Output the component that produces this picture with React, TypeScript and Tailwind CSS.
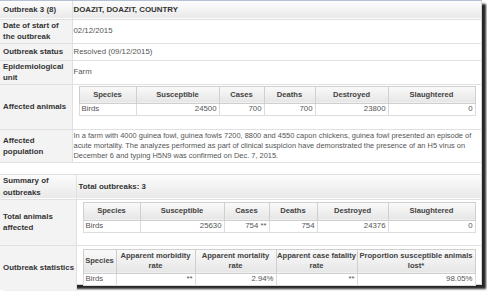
import type { ReactNode } from "react";

const labelCell =
  "bg-[#f3f3f3] border-r border-[#e0e0e0] px-[3px] align-middle text-left font-bold text-[7.9px] leading-[11px] text-[#333]";
const valueCell = "pl-[1px] pr-[2px] align-middle text-left text-[7.8px] leading-[10px] text-[#555]";
const rowLine = "border-b border-[#e0e0e0]";
const thCell =
  "border border-[#cfcfcf] bg-linear-to-b from-[#fafafa] to-[#e6e6e6] px-0 text-center align-middle font-bold text-[7.6px] leading-[10px] text-[#444]";
const tdBase = "border border-[#dcdcdc] bg-white px-[2px] text-[7.8px] leading-[10px] text-[#555]";

interface InnerTableProps {
  widths: number[];
  headers: ReactNode[];
  row: string[];
  headHeight: string;
  className: string;
}

function InnerTable({ widths, headers, row, headHeight, className }: InnerTableProps) {
  return (
    <table className={`table-fixed border-collapse ${className}`}>
      <colgroup>
        {widths.map((w, i) => (
          <col key={i} style={{ width: w }} />
        ))}
      </colgroup>
      <thead>
        <tr className={headHeight}>
          {headers.map((h, i) => (
            <th key={i} className={thCell}>
              {h}
            </th>
          ))}
        </tr>
      </thead>
      <tbody>
        <tr className="h-[12px]">
          {row.map((v, i) => (
            <td key={i} className={i === 0 ? `${tdBase} text-left` : `${tdBase} text-right`}>
              {v}
            </td>
          ))}
        </tr>
      </tbody>
    </table>
  );
}

const killedHeaders = ["Species", "Susceptible", "Cases", "Deaths", "Destroyed", "Slaughtered"];

export default function App() {
  return (
    <div className="h-[292px] w-[487px] overflow-hidden bg-white font-['Liberation_Sans',Arial,sans-serif]">
      <div className="h-[285px] w-[482px] border-t border-r border-b border-t-[#b5c2d6] border-r-[#d2d2d2] border-b-[#d2d2d2] bg-white shadow-[4px_4px_2px_rgba(0,0,0,0.85)]">
        <table className="w-[481px] table-fixed border-collapse">
          <colgroup>
            <col className="w-[72px]" />
            <col />
          </colgroup>
          <tbody>
            <tr className={`h-[18px] ${rowLine} bg-linear-to-b from-[#fdfdfd] to-[#e9e9e9]`}>
              <td className="border-r border-[#e0e0e0] px-[3px] align-middle font-bold text-[7.9px] text-[#333]">
                Outbreak 3 (8)
              </td>
              <td className="pl-[1px] align-middle font-bold text-[7.9px] text-[#333]">DOAZIT, DOAZIT, COUNTRY</td>
            </tr>
            <tr className={`h-[24px] ${rowLine}`}>
              <td className={labelCell}>Date of start of the outbreak</td>
              <td className={valueCell}>02/12/2015</td>
            </tr>
            <tr className={`h-[17px] ${rowLine}`}>
              <td className={labelCell}>Outbreak status</td>
              <td className={valueCell}>Resolved (09/12/2015)</td>
            </tr>
            <tr className={`h-[24px] ${rowLine}`}>
              <td className={labelCell}>Epidemiological unit</td>
              <td className={valueCell}>Farm</td>
            </tr>
            <tr className={`h-[44px] ${rowLine}`}>
              <td className={labelCell}>Affected animals</td>
              <td className="pt-[1px] pb-[13px] pl-[6px] align-top">
                <InnerTable
                  className="w-[396px]"
                  widths={[57, 83, 45, 51, 73, 87]}
                  headers={killedHeaders}
                  row={["Birds", "24500", "700", "700", "23800", "0"]}
                  headHeight="h-[17px]"
                />
              </td>
            </tr>
            <tr className={`h-[33px] ${rowLine}`}>
              <td className={labelCell}>Affected population</td>
              <td className={`${valueCell} whitespace-nowrap text-[7.45px] leading-[9.5px]`}>
                In a farm with 4000 guinea fowl, guinea fowls 7200, 8800 and 4550 capon chickens, guinea fowl presented
                an episode of
                <br />
                acute mortality. The analyzes performed as part of clinical suspicion have demonstrated the presence of
                an H5 virus on
                <br />
                December 6 and typing H5N9 was confirmed on Dec. 7, 2015.
              </td>
            </tr>
          </tbody>
        </table>

        <div className="h-[11px]" />

        <table className="w-[481px] table-fixed border-collapse border-t border-[#e0e0e0]">
          <colgroup>
            <col className="w-[76px]" />
            <col />
          </colgroup>
          <tbody>
            <tr className={`h-[23px] ${rowLine} bg-linear-to-b from-[#fdfdfd] to-[#e9e9e9]`}>
              <td className="border-r border-[#e0e0e0] px-[3px] align-middle font-bold text-[7.9px] leading-[12px] text-[#333]">
                Summary of outbreaks
              </td>
              <td className="pl-[2px] align-middle font-bold text-[7.9px] text-[#333]">Total outbreaks: 3</td>
            </tr>
            <tr className={`h-[43px] ${rowLine}`}>
              <td className={labelCell}>Total animals affected</td>
              <td className="pt-[2px] pb-[12px] pl-[6px] align-top">
                <InnerTable
                  className="w-[392px]"
                  widths={[57, 84, 45, 48, 71, 87]}
                  headers={killedHeaders}
                  row={["Birds", "25630", "754 **", "754", "24376", "0"]}
                  headHeight="h-[18px]"
                />
              </td>
            </tr>
            <tr className="h-[43px]">
              <td className={`${labelCell} whitespace-nowrap`}>Outbreak statistics</td>
              <td className="pt-[3px] pb-[4px] pl-[6px] align-top">
                <InnerTable
                  className="w-[392px]"
                  widths={[33, 79, 81, 81, 118]}
                  headers={[
                    "Species",
                    "Apparent morbidity rate",
                    "Apparent mortality rate",
                    "Apparent case fatality rate",
                    "Proportion susceptible animals lost*",
                  ]}
                  row={["Birds", "**", "2.94%", "**", "98.05%"]}
                  headHeight="h-[24px]"
                />
              </td>
            </tr>
          </tbody>
        </table>
      </div>
    </div>
  );
}
